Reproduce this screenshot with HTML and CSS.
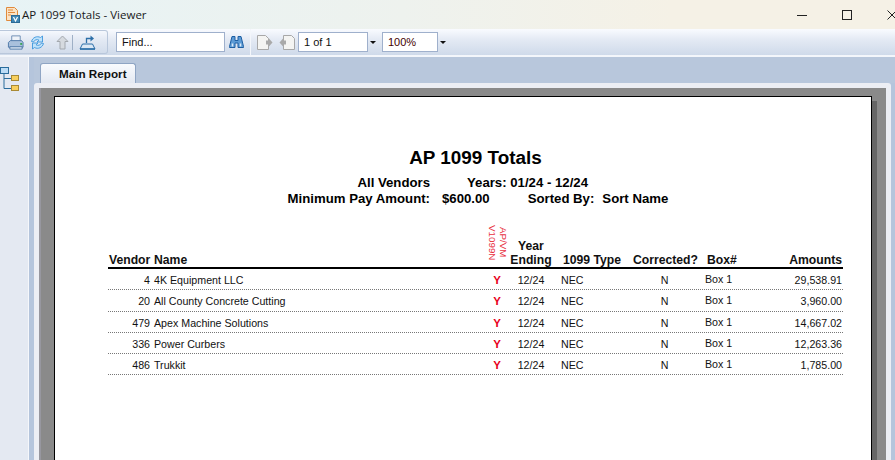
FILE: index.html
```html
<!DOCTYPE html>
<html lang="en">
<head>
<meta charset="utf-8">
<title>AP 1099 Totals - Viewer</title>
<link rel="stylesheet" href="styles.css">
</head>
<body>
<div class="app">
  <header class="titlebar">
    <svg class="app-icon" width="14" height="16" viewBox="0 0 14 16">
      <path d="M.5.500h8l3 3v10H.500z" fill="#fbe3c4" stroke="#e08a3c"/>
      <path d="M2 3h5M2 5.500h7M2 8h3" stroke="#e08a3c"/>
      <rect x="5.500" y="8.500" width="8" height="7" fill="#3f87b5" stroke="#2b6a96"/>
      <path d="M7.500 10l2 4 2-4" fill="none" stroke="#fff" stroke-width="1.200"/>
    </svg>
    <span class="app-title">AP 1099 Totals - Viewer</span>
    <div class="window-buttons">
      <svg width="10" height="10" viewBox="0 0 10 10"><path d="M0 5.500h10" stroke="#222"/></svg>
      <svg width="10" height="10" viewBox="0 0 10 10"><rect x=".5" y=".5" width="9" height="9" fill="none" stroke="#222"/></svg>
      <svg width="10" height="10" viewBox="0 0 10 10"><path d="M.5.500l9 9M9.500.500l-9 9" stroke="#222"/></svg>
    </div>
  </header>

  <nav class="toolbar">
    <div class="tool-group">
      <svg width="17" height="17" viewBox="0 0 18 17">
        <path d="M5 1.500h9v6H5z" fill="#eef2f8" stroke="#6d8db4"/>
        <path d="M1.500 8.500l2-2h12l1.500 2v5h-15.500z" fill="#a9c0dc" stroke="#4f78a8"/>
        <path d="M3 13h13v2.500H3z" fill="#dfe8f3" stroke="#4f78a8"/>
        <path d="M14 9h2v2h-2z" fill="#3aa655"/>
      </svg>
      <svg width="15" height="15" viewBox="0 0 15 15">
        <path d="M1.500 6.500C2.500 2.500 7 .5 10.500 2.500L12.500 1v6H7l2-1.800C7 4 4.500 4.800 3.500 7z" fill="#bfe2fa" stroke="#3d96dc" stroke-width=".9"/>
        <path d="M13.500 8.500C12.500 12.500 8 14.500 4.500 12.500L2.500 14V8H8l-2 1.800C8 11 10.500 10.200 11.500 8z" fill="#bfe2fa" stroke="#3d96dc" stroke-width=".9"/>
      </svg>
      <svg class="tool-up" width="13" height="15" viewBox="0 0 13 15">
        <path d="M6.500 1L12 6.500H9V14H4V6.500H1z" fill="#d6dadf" stroke="#a3a8ae"/>
      </svg>
      <span class="tool-sep"></span>
      <svg width="17" height="16" viewBox="0 0 17 16">
        <path d="M1 15l2.500-5h10l2.500 5z" fill="#dbe8f5" stroke="#2c6fa8"/>
        <path d="M1 15h15" stroke="#2c6fa8" stroke-width="1.500"/>
        <path d="M7.500 9V4.500H12" fill="none" stroke="#2c6fa8" stroke-width="1.300"/>
        <path d="M11.500 1.500l3.500 3-3.500 3z" fill="#2c6fa8"/>
      </svg>
    </div>
    <div class="find-group">
      <span class="field find-field">Find...</span>
      <svg class="binoculars" width="15" height="14" viewBox="0 0 15 14">
        <path d="M3 1.500h3v4h3v-4h3l2.500 10v1h-5.500V8H6v4.500H.5v-1z" fill="#5d9bd5" stroke="#1e5fa3"/>
        <path d="M3.500 8.500v3M11.500 8.500v3" stroke="#dcebf8" stroke-width="1.500"/>
      </svg>
    </div>
    <div class="page-group">
      <svg width="16" height="15" viewBox="0 0 16 15">
        <path d="M.5.500h8l3 3v11H.500z" fill="#f4f4f2" stroke="#a8a8a8"/>
        <path d="M9 5.500h2.500V3l4 4.500-4 4.500V9.500H9z" fill="#a9a9a9"/>
      </svg>
      <svg width="16" height="15" viewBox="0 0 16 15">
        <path d="M4.500.500h8l3 3v11h-11z" fill="#f4f4f2" stroke="#a8a8a8"/>
        <path d="M7 5.500H4.500V3l-4 4.500 4 4.500V9.500H7z" fill="#a9a9a9"/>
      </svg>
      <span class="field page-field">1 of 1</span>
      <span class="drop-arrow"></span>
      <span class="field zoom-field">100%</span>
      <span class="drop-arrow"></span>
    </div>
  </nav>

  <div class="main">
    <aside class="sidebar">
      <svg width="20" height="24" viewBox="0 0 20 24">
        <rect x=".5" y=".5" width="8" height="6" fill="#bcdcf6" stroke="#2a6c9c"/>
        <path d="M4 7v14.500h7M4 11.500h7" fill="none" stroke="#2a6c9c"/>
        <rect x="11.500" y="8.500" width="7" height="5" fill="#f8cf5e" stroke="#a98a35"/>
        <rect x="11.500" y="18.500" width="7" height="5" fill="#f8cf5e" stroke="#a98a35"/>
      </svg>
    </aside>
    <section class="content">
      <div class="tabstrip"><div class="tab">Main Report</div></div>
      <div class="panel">
        <div class="canvas">
          <article class="page">
            <h1 class="report-title">AP 1099 Totals</h1>
            <div class="sub-row">
              <span class="sub-label">All Vendors</span>
              <span class="gap-years">Years: 01/24 - 12/24</span>
            </div>
            <div class="sub-row">
              <span class="sub-label">Minimum Pay Amount:</span>
              <span class="gap-amount">$600.00</span>
              <span class="gap-sorted">Sorted By:</span>
              <span class="gap-name">Sort Name</span>
            </div>

            <div class="grid head">
              <span class="vendor-head">Vendor</span>
              <span class="name-head">Name</span>
              <span class="rotated">AP/VM<br>V1099N</span>
              <span class="center">Year<br>Ending</span>
              <span class="type-head">1099 Type</span>
              <span class="corrected-head">Corrected?</span>
              <span class="box-head">Box#</span>
              <span class="right">Amounts</span>
            </div>

            <div class="grid row">
              <span class="right">4</span><span class="name">4K Equipment LLC</span><span class="flag">Y</span><span class="center">12/24</span><span class="type">NEC</span><span class="center">N</span><span class="box">Box 1</span><span class="right">29,538.91</span>
            </div>
            <div class="grid row">
              <span class="right">20</span><span class="name">All County Concrete Cutting</span><span class="flag">Y</span><span class="center">12/24</span><span class="type">NEC</span><span class="center">N</span><span class="box">Box 1</span><span class="right">3,960.00</span>
            </div>
            <div class="grid row">
              <span class="right">479</span><span class="name">Apex Machine Solutions</span><span class="flag">Y</span><span class="center">12/24</span><span class="type">NEC</span><span class="center">N</span><span class="box">Box 1</span><span class="right">14,667.02</span>
            </div>
            <div class="grid row">
              <span class="right">336</span><span class="name">Power Curbers</span><span class="flag">Y</span><span class="center">12/24</span><span class="type">NEC</span><span class="center">N</span><span class="box">Box 1</span><span class="right">12,263.36</span>
            </div>
            <div class="grid row">
              <span class="right">486</span><span class="name">Trukkit</span><span class="flag">Y</span><span class="center">12/24</span><span class="type">NEC</span><span class="center">N</span><span class="box">Box 1</span><span class="right">1,785.00</span>
            </div>
          </article>
        </div>
      </div>
    </section>
  </div>
</div>
</body>
</html>
```

FILE: styles.css
```css
* { box-sizing: border-box; }
html, body { margin: 0; height: 460px; overflow: hidden; }
body { font-family: "Liberation Sans", Arial, sans-serif; color: #000; background: #fff; }
.app { width: 895px; height: 460px; display: flex; flex-direction: column; overflow: hidden; }

.titlebar {
  height: 29px; flex: none; display: flex; align-items: center; padding-left: 6px;
  background: linear-gradient(90deg, #e7f3f5 0%, #eef2ee 45%, #f5f1e6 75%, #f5f1e6 100%);
}
.app-title { font-family: "Open Sans", sans-serif; font-size: 11.5px; color: #1a1a1a; margin-left: 2px; }
.window-buttons { margin-left: auto; display: flex; gap: 35px; margin-right: -2px; }

.toolbar {
  height: 28px; flex: none; display: flex; align-items: center;
  background: linear-gradient(180deg, #f9fbff 0%, #e4eaf4 40%, #cfdaea 100%);
  border-bottom: 2px solid #f3f6fb;
}
.tool-group {
  width: 108px; height: 24px; display: flex; align-items: center; padding-left: 7px; gap: 6px;
  border: 1px solid #b9c7db; border-left: 0; border-radius: 0 3px 3px 0;
}
.tool-up { margin-left: 5px; }
.tool-sep { width: 1px; height: 15px; background: #9fb0c6; margin-left: -3px; }
.field {
  height: 20px; display: flex; align-items: center; background: #fff; border: 1px solid #9fb0cc;
  font-size: 11px; color: #111; padding-left: 5px;
}
.find-group { display: flex; align-items: center; margin-left: 8px; width: 135px; height: 26px; border-right: 1px solid #f3f6fb; }
.find-field { width: 109px; }
.binoculars { margin-left: 4px; }
.page-group { display: flex; align-items: center; margin-left: 6px; gap: 6px; }
.page-field { width: 70px; margin-left: -3px; }
.zoom-field { width: 56px; color: #400; }
.drop-arrow { width: 0; height: 0; border: 3px solid transparent; border-top: 3px solid #111; border-bottom: 0; margin-left: -4px; }

.main { flex: 1; display: flex; min-height: 0; }
.sidebar {
  width: 29px; flex: none; padding-top: 10px; background: #e4e9f2;
  border-right: 1px solid #f5f7fb;
  overflow: hidden;
}
.content { flex: 1; display: flex; flex-direction: column; min-width: 0; background: #b5c5dc; padding-left: 5px; }
.tabstrip { height: 26px; flex: none; padding: 6px 0 0 6px; background: #b8c7dc; }
.tab {
  width: 96px; height: 20px; border: 1px solid #8fa5c4; border-bottom: 0; border-radius: 3px 3px 0 0;
  background: linear-gradient(180deg, #f9fbfe, #e4e9f2);
  font-size: 11.7px; font-weight: 700; line-height: 19px; padding-left: 18px; color: #111;
}
.panel { flex: 1; min-height: 0; background: #eceef4; padding: 5px 5px 0 5px; margin-right: 4px; border-radius: 3px 3px 0 0; }
.canvas { height: 100%; background: #8a8a8a; padding: 8px 14px 0 13px; border-left: 2px solid #97979f; overflow: hidden; }
.page {
  width: 818px; height: 400px; background: #fff; border: 1px solid #000;
  padding: 50px 28px 0 53px; box-shadow: 5px 5px 0 #666;
}

.report-title { margin: 0; text-align: center; font-size: 18.9px; font-weight: 700; line-height: 22px; }
.sub-row { display: flex; font-size: 13.2px; font-weight: 700; line-height: 16px; white-space: pre; }
.report-title + .sub-row { margin-top: 6px; }
.sub-label { width: 322px; text-align: right; }
.gap-years { margin-left: 37px; }
.gap-amount { margin-left: 12px; }
.gap-sorted { margin-left: 38px; }
.gap-name { margin-left: 8px; }

.grid { display: grid; grid-template-columns: 42px 335px 24px 44px 72px 79px 56px 82px; }
.head {
  margin-top: 17px; height: 45px; align-items: end; font-size: 12.2px; font-weight: 700; line-height: 14px;
  border-bottom: 2px solid #000; color: #111;
}
.row {
  height: 21.25px; align-items: center; padding-top: 2px; font-size: 10.67px; color: #111;
  border-bottom: 1px dotted #777;
}
.right { text-align: right; }
.center { text-align: center; }
.vendor-head { padding-left: 1px; }
.name-head, .name { padding-left: 4px; }
.type-head { padding-left: 10px; white-space: nowrap; }
.type { padding-left: 8px; }
.corrected-head { text-align: center; white-space: nowrap; padding-left: 2px; }
.box-head { padding-left: 3px; }
.box { padding-left: 1px; padding-bottom: 2px; }
.flag { text-align: center; color: #e8001c; font-weight: 700; font-size: 11.5px; }
.rotated {
  writing-mode: vertical-rl; text-align: center; font-size: 9.8px; font-weight: 400; line-height: 11px; color: #e8313f;
  justify-self: center; align-self: end; margin: 0 0 7px 1px; white-space: nowrap;
}
```
